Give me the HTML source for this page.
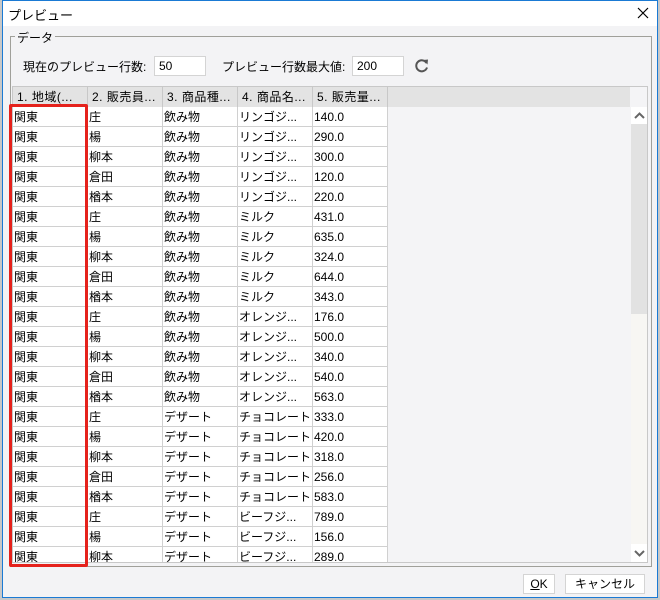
<!DOCTYPE html>
<html><head><meta charset="utf-8"><style>
*{margin:0;padding:0;box-sizing:border-box}
body{width:660px;height:600px;background:#c8c8c8;position:relative;overflow:hidden;font-family:"Liberation Sans","Noto Sans CJK JP",sans-serif;font-size:12px;color:#000}
.win{position:absolute;left:2px;top:0;width:656px;height:598px;background:#f3f3f5;border:1px solid #1a7ad4}
.title{position:absolute;left:0;top:0;width:654px;height:25px;background:#fff}
.a{position:absolute;white-space:nowrap}
.grp{position:absolute;left:7px;top:35px;width:642px;height:531px;border:1px solid #a0a09a}
.inp{position:absolute;height:20px;background:#fff;border:1px solid #d4d4d4;padding-left:4px;line-height:18px}
.tbl{position:absolute;left:9px;top:85px;width:636px;height:477px;background:#f4f4f6;border:1px solid #c8c8c8;overflow:hidden}
.hd{position:absolute;left:0;top:0;width:617px;height:20px;background:#e3e3e3}
.hc{position:absolute;top:0;height:20px;line-height:20px;padding-left:4px;border-right:1px solid #c8c8c8;width:75px;letter-spacing:0.5px}
.c{position:absolute;height:20px;line-height:20px;width:75px;background:#fff;border-right:1px solid #d0d0d0;border-bottom:1px solid #d0d0d0;padding-left:1px;overflow:hidden;white-space:nowrap}
.btn{position:absolute;height:20px;background:#fff;border:1px solid #d4d4d4;text-align:center;line-height:18px}
</style></head><body>
<div class="win">
<div class="title"></div>
<div class="a" style="left:5px;top:4px;font-size:13px">プレビュー</div>
<svg class="a" style="left:634px;top:6px" width="12" height="12"><path d="M1 1L11 11M11 1L1 11" stroke="#000" stroke-width="1.2"/></svg>
<div class="grp"></div>
<div class="a" style="left:12px;top:28px;background:#f3f3f5;padding:0 2px">データ</div>
<div class="a" style="left:20px;top:57px">現在のプレビュー行数:</div>
<div class="inp" style="left:151px;top:55px;width:52px">50</div>
<div class="a" style="left:219px;top:57px">プレビュー行数最大値:</div>
<div class="inp" style="left:349px;top:55px;width:52px">200</div>
<svg class="a" style="left:411px;top:57px" width="16" height="16"><path d="M12.5 5A5.5 5.5 0 1 0 13 9.5" fill="none" stroke="#555" stroke-width="2"/><path d="M9 2L14 1.5L13.5 6.5Z" fill="#555"/></svg>
<div class="tbl">
<div class="hd">
<div class="hc" style="left:0">1. 地域(...</div>
<div class="hc" style="left:75px">2. 販売員...</div>
<div class="hc" style="left:150px">3. 商品種...</div>
<div class="hc" style="left:225px">4. 商品名...</div>
<div class="hc" style="left:300px">5. 販売量...</div>
</div>
<div id="rows"></div>
<div class="a" style="left:618px;top:20px;width:17px;height:17px;background:#fff"><svg width="17" height="17"><path d="M4 11L8.5 6.5L13 11" fill="none" stroke="#666" stroke-width="2"/></svg></div>
<div class="a" style="left:618px;top:37px;width:17px;height:190px;background:#e2e2e2"></div>
<div class="a" style="left:618px;top:227px;width:17px;height:230px;background:#f7f6f3"></div>
<div class="a" style="left:618px;top:457px;width:17px;height:19px;background:#fff"><svg width="17" height="17"><path d="M4 7L8.5 11.5L13 7" fill="none" stroke="#666" stroke-width="2"/></svg></div>
</div>
<div class="a" style="left:6px;top:103px;width:79px;height:463px;border:3px solid #e5221c;border-radius:2px"></div>
<div class="btn" style="left:520px;top:573px;width:32px"><u>O</u>K</div>
<div class="btn" style="left:562px;top:573px;width:80px">キャンセル</div>
</div>
<script>
var s=["庄","楊","柳本","倉田","楢本"],k=["飲み物","飲み物","飲み物","デザート","デザート"],n=["リンゴジ...","ミルク","オレンジ...","チョコレート","ビーフジ..."],
v=["140.0","290.0","300.0","120.0","220.0","431.0","635.0","324.0","644.0","343.0","176.0","500.0","340.0","540.0","563.0","333.0","420.0","318.0","256.0","583.0","789.0","156.0","289.0"];
var h="";for(var i=0;i<23;i++){var t=20+i*20,g=Math.floor(i/5);
var d=["関東",s[i%5],k[g],n[g],v[i]];for(var j=0;j<5;j++){h+='<div class="c" style="left:'+(j*75)+'px;top:'+t+'px">'+d[j]+'</div>';}}
document.getElementById("rows").innerHTML=h;
</script>
</body></html>
